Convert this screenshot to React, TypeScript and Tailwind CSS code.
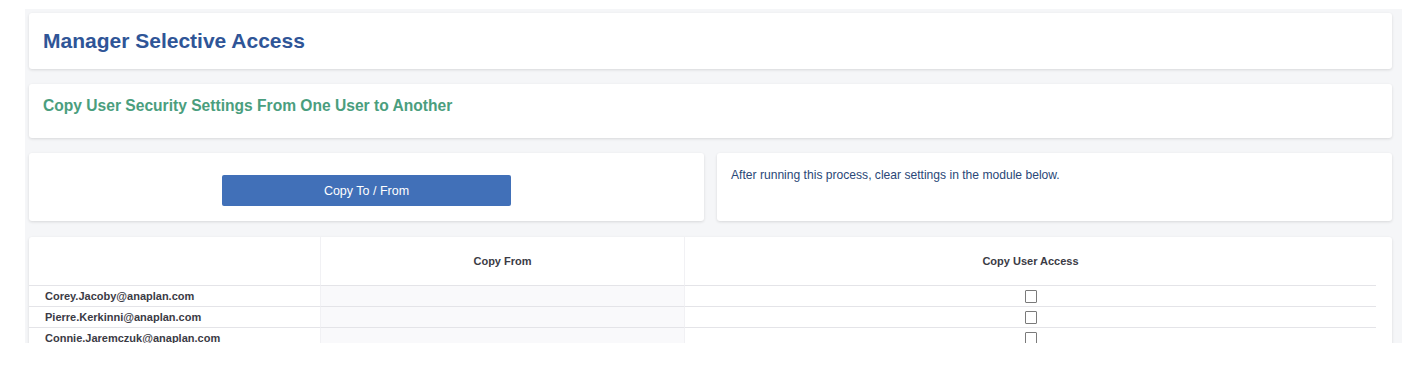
import type { FC, ReactNode } from "react";

// ─── DATA ─────────────────────────────────────────────────────────────────────

const users = [
  "Corey.Jacoby@anaplan.com",
  "Pierre.Kerkinni@anaplan.com",
  "Connie.Jaremczuk@anaplan.com",
];

// ─── PIECES ───────────────────────────────────────────────────────────────────

const Card: FC<{ className?: string; children?: ReactNode }> = ({ className = "", children }) => (
  <div
    className={`bg-white rounded-[3px] shadow-[0_1px_3px_rgba(0,0,0,0.12)] ${className}`}
  >
    {children}
  </div>
);

const Checkbox: FC = () => (
  <span className="inline-block w-[12px] h-[13px] border border-[#7a7a7a] bg-white rounded-[1px]" />
);

// ─── APP ──────────────────────────────────────────────────────────────────────

export default function App() {
  return (
    <div
      className="w-full h-[382px] bg-white overflow-hidden"
      style={{ fontFamily: '"Liberation Sans", Arial, sans-serif' }}
    >
      <div className="ml-[25px] mt-[9px] w-[1377px] h-[334px] bg-[#f5f6f8] pl-[4px] pr-[10px] pt-[4px] flex flex-col overflow-hidden">
        {/* ── Page title ── */}
        <Card className="h-[56px] flex items-center px-[14px] pb-[2px] shrink-0">
          <h1 className="text-[21px] font-bold text-[#2f5597] leading-none">
            Manager Selective Access
          </h1>
        </Card>

        {/* ── Subtitle ── */}
        <Card className="mt-[15px] h-[54px] px-[14px] pt-[14px] shrink-0">
          <h2 className="text-[15.6px] font-bold text-[#4a9e7e] leading-[16px]">
            Copy User Security Settings From One User to Another
          </h2>
        </Card>

        {/* ── Action + note ── */}
        <div className="mt-[15px] h-[68px] flex gap-[13px] shrink-0">
          <Card className="w-[675px] flex justify-center pt-[22px]">
            <button className="w-[289px] h-[31px] pt-[1px] bg-[#4170b8] text-white text-[12.5px] rounded-[2px]">
              Copy To / From
            </button>
          </Card>
          <Card className="w-[675px] px-[14px] pt-[15px]">
            <p className="text-[12.1px] text-[#2a4777] leading-[14px]">
              After running this process, clear settings in the module below.
            </p>
          </Card>
        </div>

        {/* ── Grid ── */}
        <Card className="mt-[16px] flex-1 pr-[16px] rounded-b-none">
          <div className="grid grid-cols-[291px_365px_1fr] text-[11px] font-bold text-[#3b3b45]">
            <div className="h-[49px] border-b border-[#e4e4e8]" />
            <div className="h-[49px] pt-[1px] border-b border-[#e4e4e8] border-x border-x-[#f1f1f4] flex items-center justify-center">
              Copy From
            </div>
            <div className="h-[49px] pt-[1px] border-b border-[#e4e4e8] flex items-center justify-center">
              Copy User Access
            </div>

            {users.map((u) => (
              <div key={u} className="contents">
                <div className="h-[21px] pt-[1px] border-b border-[#e4e4e8] pl-[16px] flex items-center">
                  {u}
                </div>
                <div className="h-[21px] border-b border-[#e4e4e8] border-x border-x-[#f1f1f4] bg-[#f9f9fb]" />
                <div className="h-[21px] pt-[1px] border-b border-[#e4e4e8] flex items-center justify-center pl-[1px]">
                  <Checkbox />
                </div>
              </div>
            ))}
          </div>
        </Card>
      </div>
    </div>
  );
}
